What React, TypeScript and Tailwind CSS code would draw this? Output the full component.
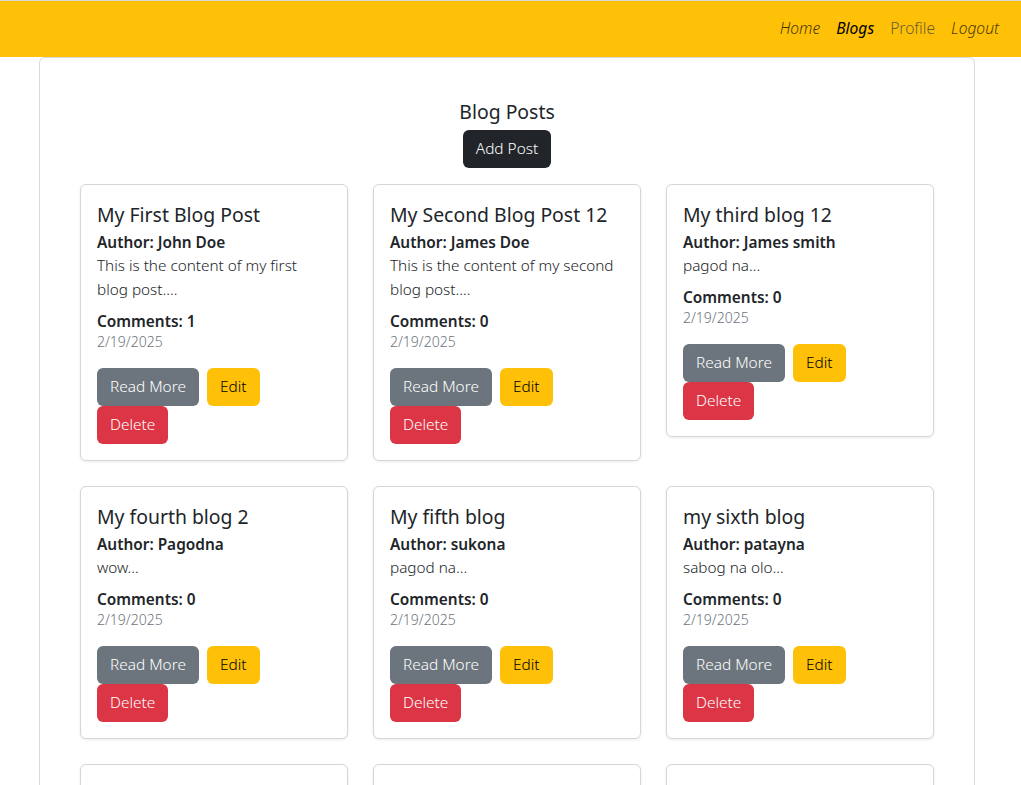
import React from 'react';

type Post = {
  title: string;
  author: string;
  content: string;
  comments: number;
  date: string;
};

const posts: Post[] = [
  { title: 'My First Blog Post', author: 'John Doe', content: 'This is the content of my first blog post....', comments: 1, date: '2/19/2025' },
  { title: 'My Second Blog Post 12', author: 'James Doe', content: 'This is the content of my second blog post....', comments: 0, date: '2/19/2025' },
  { title: 'My third blog 12', author: 'James smith', content: 'pagod na...', comments: 0, date: '2/19/2025' },
  { title: 'My fourth blog 2', author: 'Pagodna', content: 'wow...', comments: 0, date: '2/19/2025' },
  { title: 'My fifth blog', author: 'sukona', content: 'pagod na...', comments: 0, date: '2/19/2025' },
  { title: 'my sixth blog', author: 'patayna', content: 'sabog na olo...', comments: 0, date: '2/19/2025' },
  { title: 'my seventh blog', author: 'patayna', content: 'hello...', comments: 0, date: '2/19/2025' },
  { title: 'my eighth blog', author: 'patayna', content: 'hello...', comments: 0, date: '2/19/2025' },
  { title: 'my ninth blog', author: 'patayna', content: 'hello...', comments: 0, date: '2/19/2025' },
];

function PostCard({ post }: { post: Post }) {
  return (
    <div className="rounded-md border border-[#d6d6d6] bg-white p-4 shadow-[0_1px_3px_rgba(0,0,0,0.08)]">
      <h5 className="mb-1 text-[19.4px] leading-7 font-normal text-[#212529]">{post.title}</h5>
      <h6 className="text-[15.4px] leading-5 font-semibold text-[#212529]">Author: {post.author}</h6>
      <p className="mb-[11px] pr-1 text-[15.3px] leading-6 font-light text-[#212529]">{post.content}</p>
      <p className="text-[15.4px] leading-5 font-semibold text-[#212529]">Comments: {post.comments}</p>
      <p className="mb-4 text-[14px] leading-5 font-light text-[#6c757d]">{post.date}</p>
      <div className="flex flex-wrap gap-x-2">
        <button className="h-[38px] rounded-md bg-[#6c757d] px-[13px] text-[15.4px] font-light text-white">Read More</button>
        <button className="h-[38px] rounded-md bg-[#ffc107] px-[13px] text-[15.4px] font-light text-black">Edit</button>
        <button className="h-[38px] rounded-md bg-[#dc3545] px-[13px] text-[15.4px] font-light text-white">Delete</button>
      </div>
    </div>
  );
}

function App() {
  return (
    <div className="min-h-screen bg-white font-['Noto_Sans',sans-serif] text-[#212529]">
      {/* navbar */}
      <nav className="flex h-[57px] items-center justify-end border-t border-[#d9d9d9] bg-[#ffc107] pr-[14px]">
        <a className="px-2 text-[15.6px] font-light italic text-black/75">Home</a>
        <a className="px-2 text-[15.6px] font-normal italic text-black">Blogs</a>
        <a className="px-2 text-[15.6px] font-light text-[#6b5d2e]">Profile</a>
        <a className="px-2 text-[15.6px] font-light italic text-black/75">Logout</a>
      </nav>

      <div className="ml-[39px] w-[936px] rounded-t-md border border-b-0 border-[#d9d9d9] px-10 pt-[42px] pb-10">
        <div className="flex flex-col items-center">
          <h4 className="text-[19.4px] leading-6 font-normal">Blog Posts</h4>
          <button className="mt-[6px] mb-4 h-[38px] rounded-md bg-[#212529] px-[13px] text-[15.4px] font-light text-white">Add Post</button>
        </div>
        <div className="grid grid-cols-3 items-start gap-[25px]">
          {posts.map((p) => (
            <PostCard key={p.title} post={p} />
          ))}
        </div>
      </div>
    </div>
  );
}

export default App;
